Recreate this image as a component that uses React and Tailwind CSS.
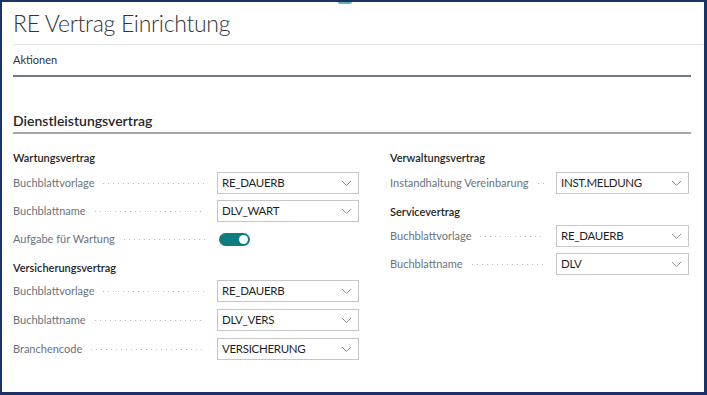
import React from "react";

const font = { fontFamily: 'Lato, "Open Sans", sans-serif' };

function Chevron() {
  return (
    <svg width="11" height="7" viewBox="0 0 11 7" className="shrink-0">
      <path d="M1 1 L5.5 5.5 L10 1" fill="none" stroke="#8f8f8f" strokeWidth="1" />
    </svg>
  );
}

function Select({ value, w }) {
  return (
    <div className={`flex h-[22px] items-center justify-between border border-[#c6c6c6] bg-white pl-[4px] pr-[6px] ${w}`}>
      <span className="text-[11.5px] tracking-[-0.3px] text-[#1f1f1f]">{value}</span>
      <Chevron />
    </div>
  );
}

function Label({ text, w }) {
  return (
    <div className={`flex items-center gap-[7px] overflow-hidden pr-[12px] ${w}`}>
      <span className="shrink-0 whitespace-nowrap text-[11px] text-[#6a737c]">{text}</span>
      <span className="h-[3px] flex-1 bg-[radial-gradient(circle,#bdbdbd_0.7px,transparent_1px)] bg-[length:5px_3px]" />
    </div>
  );
}

function Row({ label, value, lw, iw }) {
  return (
    <div className="flex h-[22px] items-center">
      <Label text={label} w={lw} />
      <Select value={value} w={iw} />
    </div>
  );
}

function Toggle() {
  return (
    <div className="flex h-[13px] w-[31px] items-center justify-end rounded-full bg-[#0f7c80] pr-[2px]">
      <div className="h-[9px] w-[9px] rounded-full bg-white" />
    </div>
  );
}

function Heading({ children, cls }) {
  return <div className={`flex items-end text-[11px] font-semibold leading-none text-[#262626] ${cls}`}>{children}</div>;
}

export default function App() {
  return (
    <div
      style={font}
      className="relative h-[395px] w-[707px] overflow-hidden border-b-[3px] border-l-2 border-r-[3px] border-t-2 border-[#1b3167] bg-white"
    >
      <div className="absolute left-[336px] top-0 h-[2px] w-[14px] rounded-b-full bg-[#5fb3c4]" />
      <div className="flex h-[42px] items-center pl-[11px] pt-[1px]">
        <h1 className="text-[23px] font-light leading-none tracking-[-0.3px] text-[#333333]">RE Vertrag Einrichtung</h1>
      </div>
      <div className="ml-[11px] h-[1px] bg-[#e3e3e3]" />
      <div className="ml-[11px] mr-[13px] flex h-[32px] items-center border-b-2 border-[#6f7780]">
        <span className="text-[11px] text-[#333]">Aktionen</span>
      </div>
      <div className="ml-[11px] mr-[13px] mt-[36px] flex h-[21px] items-end border-b-2 border-[#a7a7a7] pb-[4px]">
        <span className="text-[14px] font-semibold leading-none text-[#262626]">Dienstleistungsvertrag</span>
      </div>
      <div className="ml-[11px] flex gap-[31px]">
        <div className="flex w-[346px] flex-col">
          <Heading cls="h-[38px] pb-[9px]">Wartungsvertrag</Heading>
          <div className="flex flex-col gap-[6px]">
            <Row label="Buchblattvorlage" value="RE_DAUERB" lw="w-[204px]" iw="w-[142px]" />
            <Row label="Buchblattname" value="DLV_WART" lw="w-[204px]" iw="w-[142px]" />
            <div className="flex h-[22px] items-center">
              <Label text="Aufgabe für Wartung" w="w-[206px]" />
              <Toggle />
            </div>
          </div>
          <Heading cls="h-[30px] pb-[7px]">Versicherungsvertrag</Heading>
          <div className="flex flex-col gap-[7px]">
            <Row label="Buchblattvorlage" value="RE_DAUERB" lw="w-[204px]" iw="w-[142px]" />
            <Row label="Buchblattname" value="DLV_VERS" lw="w-[204px]" iw="w-[142px]" />
            <Row label="Branchencode" value="VERSICHERUNG" lw="w-[204px]" iw="w-[142px]" />
          </div>
        </div>
        <div className="flex w-[299px] flex-col">
          <Heading cls="h-[38px] pb-[9px]">Verwaltungsvertrag</Heading>
          <Row label="Instandhaltung Vereinbarung" value="INST.MELDUNG" lw="w-[166px]" iw="w-[133px]" />
          <Heading cls="h-[31px] pb-[8px]">Servicevertrag</Heading>
          <div className="flex flex-col gap-[6px]">
            <Row label="Buchblattvorlage" value="RE_DAUERB" lw="w-[166px]" iw="w-[133px]" />
            <Row label="Buchblattname" value="DLV" lw="w-[166px]" iw="w-[133px]" />
          </div>
        </div>
      </div>
    </div>
  );
}
